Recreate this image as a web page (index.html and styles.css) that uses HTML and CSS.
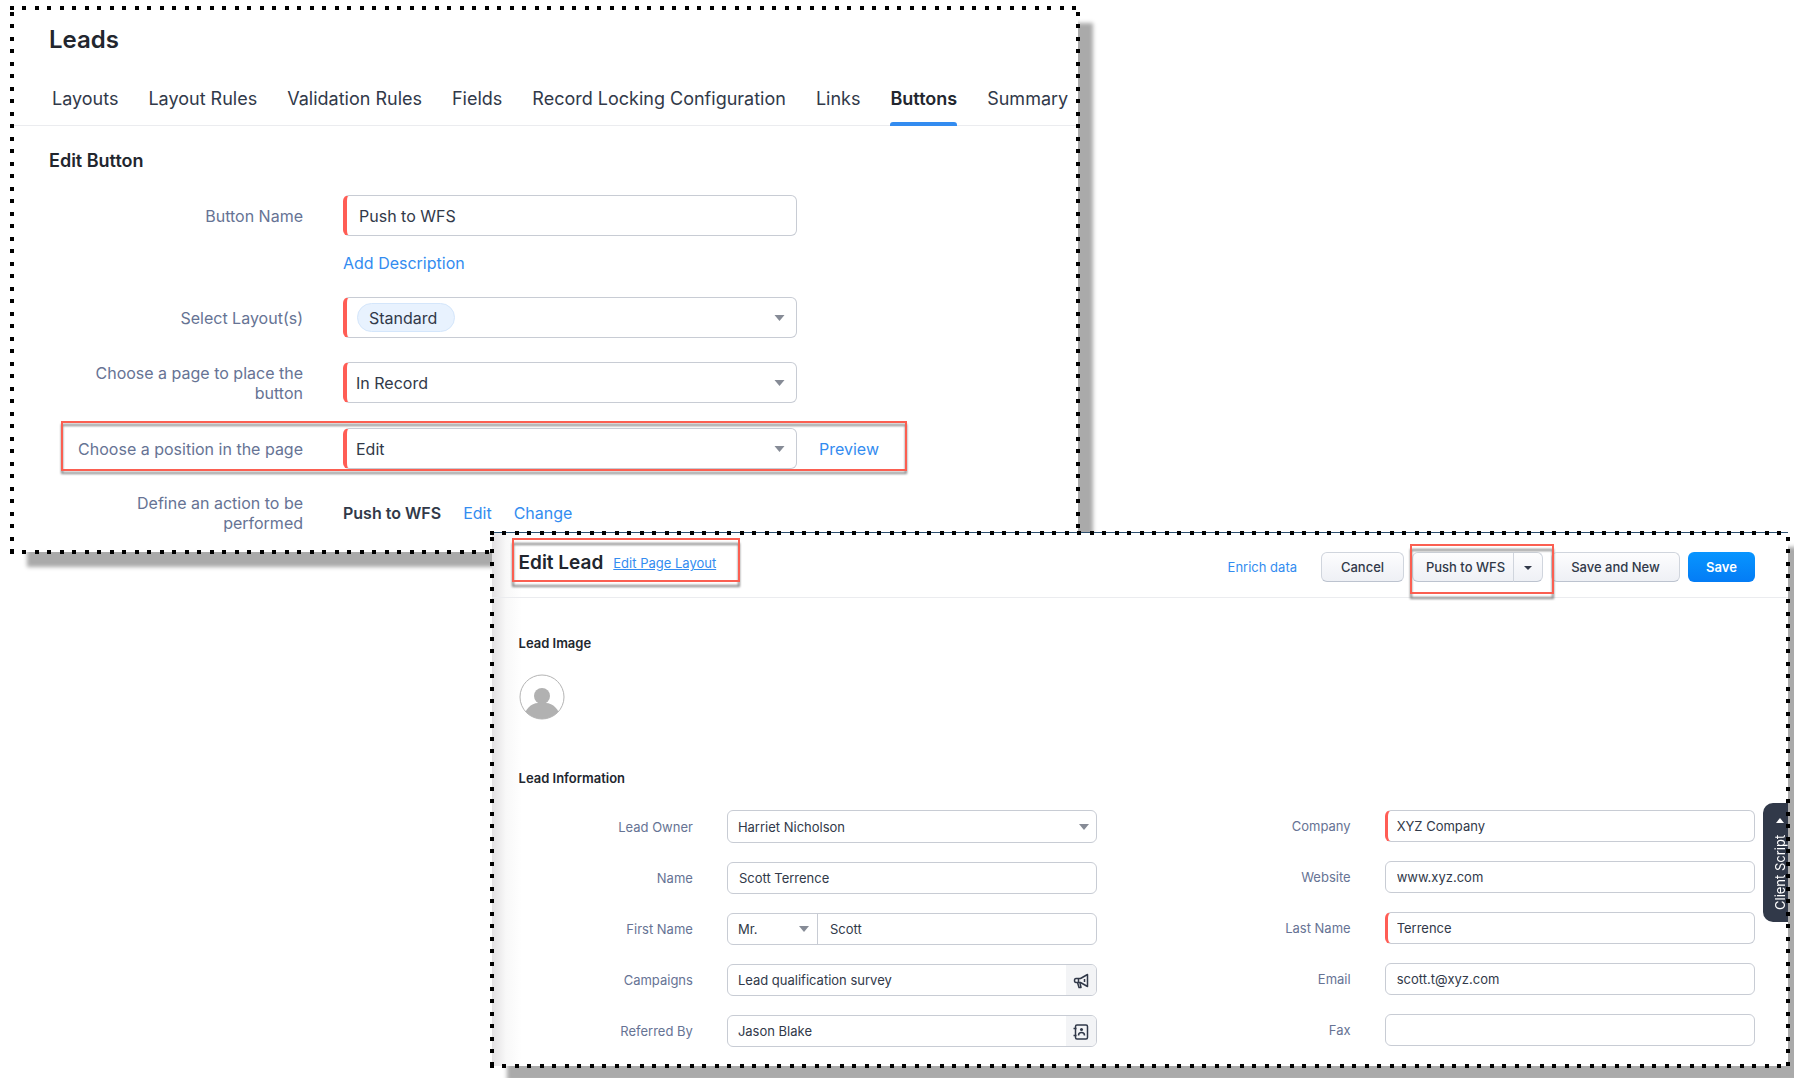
FILE: index.html
```html
<!DOCTYPE html>
<html lang="en">

<head>
    <meta charset="UTF-8">
    <meta name="viewport" content="width=device-width, initial-scale=1.0">
    <title>Leads - Edit Button</title>
    <link rel="stylesheet" href="styles.css">
</head>

<body>

    <!-- ----------- button settings ---------------- -->

    <section class="window settings">
        <h1 class="page-title">Leads</h1>

        <nav class="tabs">
            <a href="#">Layouts</a>
            <a href="#">Layout Rules</a>
            <a href="#">Validation Rules</a>
            <a href="#">Fields</a>
            <a href="#">Record Locking Configuration</a>
            <a href="#">Links</a>
            <a href="#" class="active">Buttons</a>
            <a href="#">Summary</a>
        </nav>

        <h2 class="form-title">Edit Button</h2>

        <form class="settings-form">
            <div class="row">
                <label for="button_name">Button Name</label>
                <input class="control required" type="text" id="button_name" value="Push to WFS">
            </div>

            <a href="#" class="link description">Add Description</a>

            <div class="row">
                <label for="layouts">Select Layout(s)</label>
                <div class="select-box">
                    <span class="chip"></span>
                    <select class="control required in-chip" id="layouts">
                        <option>Standard</option>
                    </select>
                    <svg class="arrow" viewBox="0 0 10 6"><path d="M0 0h10L5 6z" /></svg>
                </div>
            </div>

            <div class="row">
                <label for="page">Choose a page to place the button</label>
                <div class="select-box">
                    <select class="control required" id="page">
                        <option>In Record</option>
                    </select>
                    <svg class="arrow" viewBox="0 0 10 6"><path d="M0 0h10L5 6z" /></svg>
                </div>
            </div>

            <div class="row position-row marked">
                <label for="position">Choose a position in the page</label>
                <div class="select-box">
                    <select class="control required" id="position">
                        <option>Edit</option>
                    </select>
                    <svg class="arrow" viewBox="0 0 10 6"><path d="M0 0h10L5 6z" /></svg>
                </div>
                <a href="#" class="link">Preview</a>
            </div>

            <div class="row">
                <span class="label">Define an action to be performed</span>
                <div class="action">
                    <strong>Push to WFS</strong>
                    <a href="#" class="link">Edit</a>
                    <a href="#" class="link">Change</a>
                </div>
            </div>
        </form>
    </section>

    <!-- ----------- lead form ---------------- -->

    <section class="window lead">
        <header class="lead-header">
            <div class="lead-title marked">
                <h2>Edit Lead</h2>
                <a href="#" class="link">Edit Page Layout</a>
            </div>

            <div class="buttons">
                <a href="#" class="link">Enrich data</a>
                <button type="button" class="btn cancel">Cancel</button>
                <div class="split marked">
                    <button type="button" class="btn push">Push to WFS</button>
                    <button type="button" class="btn more" aria-label="More">
                        <svg viewBox="0 0 8 4"><path d="M0 0h8L4 4z" /></svg>
                    </button>
                </div>
                <button type="button" class="btn save-new">Save and New</button>
                <button type="button" class="btn primary">Save</button>
            </div>
        </header>

        <div class="lead-body">
            <h3>Lead Image</h3>
            <svg class="avatar" viewBox="0 0 46 46">
                <clipPath id="round"><circle cx="23" cy="23" r="22" /></clipPath>
                <circle cx="23" cy="23" r="22" fill="#fff" stroke="#b4b4b4" />
                <g clip-path="url(#round)" fill="#b1b1b1">
                    <ellipse cx="23" cy="22" rx="8" ry="8" />
                    <path d="M4 46c1-10 8-17 15-17h8c7 0 14 7 15 17z" />
                </g>
            </svg>

            <h3>Lead Information</h3>

            <form class="columns">
                <div class="column">
                    <div class="field">
                        <label for="owner">Lead Owner</label>
                        <div class="select-box tall">
                            <select class="control" id="owner">
                                <option>Harriet Nicholson</option>
                            </select>
                            <svg class="arrow" viewBox="0 0 10 6"><path d="M0 0h10L5 6z" /></svg>
                        </div>
                    </div>
                    <div class="field">
                        <label for="name">Name</label>
                        <input class="control" type="text" id="name" value="Scott Terrence">
                    </div>
                    <div class="field">
                        <label for="first_name">First Name</label>
                        <div class="group">
                            <div class="select-box salutation">
                                <select aria-label="Salutation">
                                    <option>Mr.</option>
                                </select>
                                <svg class="arrow" viewBox="0 0 10 6"><path d="M0 0h10L5 6z" /></svg>
                            </div>
                            <input type="text" id="first_name" value="Scott">
                        </div>
                    </div>
                    <div class="field">
                        <label for="campaigns">Campaigns</label>
                        <div class="group">
                            <input type="text" id="campaigns" value="Lead qualification survey">
                            <button type="button" class="lookup" aria-label="Find campaign">
                                <svg viewBox="0 0 16 16">
                                    <path d="M3 5.500h4.500L14.500 1.500v12L7.500 9.500H3c-2 0-2-4 0-4z" />
                                    <path d="M5.500 5.500v4M4.500 9.500l1.500 5h2l-1-4.500M11.500 6v3" />
                                </svg>
                            </button>
                        </div>
                    </div>
                    <div class="field">
                        <label for="referred">Referred By</label>
                        <div class="group">
                            <input type="text" id="referred" value="Jason Blake">
                            <button type="button" class="lookup" aria-label="Find contact">
                                <svg viewBox="0 0 16 16">
                                    <rect x="2.500" y="1" width="12" height="14" rx="1.500" />
                                    <path d="M.5 4.500h3M.5 11.500h3M5.500 11.500c0-4 6-4 6 0" />
                                    <circle class="dot" cx="8.500" cy="5.500" r="1.500" />
                                </svg>
                            </button>
                        </div>
                    </div>
                </div>

                <div class="column">
                    <div class="field">
                        <label for="company">Company</label>
                        <input class="control required" type="text" id="company" value="XYZ Company">
                    </div>
                    <div class="field">
                        <label for="website">Website</label>
                        <input class="control" type="text" id="website" value="www.xyz.com">
                    </div>
                    <div class="field">
                        <label for="last_name">Last Name</label>
                        <input class="control required" type="text" id="last_name" value="Terrence">
                    </div>
                    <div class="field">
                        <label for="email">Email</label>
                        <input class="control" type="text" id="email" value="scott.t@xyz.com">
                    </div>
                    <div class="field">
                        <label for="fax">Fax</label>
                        <input class="control" type="text" id="fax">
                    </div>
                </div>
            </form>
        </div>

        <button type="button" class="client-script">
            <span>Client Script</span>
            <svg viewBox="0 0 8 5"><path d="M0 0h8L4 5z" /></svg>
        </button>
    </section>

</body>

</html>
```
FILE: styles.css
```css
* {
    box-sizing: border-box;
    margin: 0;
    padding: 0;
}

body {
    padding: 8px 6px 12px 12px;
    background: #fff;
    color: #313949;
    font-family: Inter, "Liberation Sans", sans-serif;
    overflow-x: hidden;
}

a {
    color: inherit;
    text-decoration: none;
}

input,
select,
button {
    font: inherit;
    color: inherit;
}

select {
    appearance: none;
}

.link {
    color: #338cf0;
}

/* windows with a dotted frame */

.window {
    position: relative;
    isolation: isolate;
    background: #fff;
    box-shadow: 15px 15px 4px #aaa;
}

.window::after {
    content: "";
    position: absolute;
    inset: -2px;
    z-index: 2;
    pointer-events: none;
    --dots: #000 0 4px, transparent 4px 12px, #000 12px 16px, transparent 16px 25px;
    background:
        linear-gradient(90deg, var(--dots)) 0 0 / 25px 4px repeat-x,
        linear-gradient(90deg, var(--dots)) 0 100% / 25px 4px repeat-x,
        linear-gradient(var(--dots)) 0 6px / 4px 25px repeat-y,
        linear-gradient(var(--dots)) 100% 6px / 4px 25px repeat-y;
}

/* red callout ring, its shadow falls inside as well as below */

.marked {
    position: relative;
}

.marked::after {
    content: "";
    position: absolute;
    inset: 0;
    border: 2px solid #fb5f51;
    filter: drop-shadow(0 5px 1px #888);
    pointer-events: none;
}

/* shared form parts */

.control,
.group {
    width: 100%;
    background: #fff;
    border: 1px solid #c8ccd4;
    border-radius: 6px;
}

.required {
    border-left: 4px solid #ff5d55;
}

.select-box {
    position: relative;
}

.arrow {
    position: absolute;
    right: 11px;
    top: 50%;
    width: 10px;
    height: 6px;
    margin-top: -3px;
    fill: #868b96;
    pointer-events: none;
}

label,
.label {
    color: #667394;
    text-align: right;
}

/* button settings */

.settings {
    width: 60%;
    padding: 16px 0 17px;
    font-size: 16px;
    line-height: 20px;
}

.page-title {
    padding-left: 37px;
    font-size: 24px;
    line-height: 32px;
    font-weight: 600;
    color: #22262e;
}

.tabs {
    display: flex;
    gap: 30px;
    margin-top: 31px;
    padding-left: 40px;
    border-bottom: 1px solid #ebecef;
    font-size: 18px;
    line-height: 24px;
    white-space: nowrap;
}

.tabs a {
    padding-bottom: 11px;
    border-bottom: 4px solid transparent;
    margin-bottom: -1px;
}

.tabs .active {
    position: relative;
    font-weight: 600;
    color: #22262e;
}

.tabs .active::after {
    content: "";
    position: absolute;
    left: 0;
    right: 0;
    bottom: -4px;
    height: 4px;
    border-radius: 3px 3px 0 0;
    background: #338cf0;
}

.form-title {
    margin: 23px 0 20px 37px;
    font-size: 18px;
    line-height: 24px;
    font-weight: 600;
    color: #22262e;
}

.settings-form {
    padding-left: 49px;
}

.row {
    display: flex;
    align-items: center;
    width: 846px;
    margin-bottom: 20px;
    border: 2px solid transparent;
}

.row label,
.row .label {
    width: 240px;
    margin-right: 40px;
}

.row > .control,
.row .select-box {
    width: 454px;
}

.row .control {
    height: 41px;
    padding: 0 12px;
}

.row .select-box .control {
    display: block;
    padding: 0 9px;
}

.row .arrow {
    right: 12px;
    width: 11px;
}

.description {
    display: block;
    margin: -5px 0 22px 282px;
}

.chip {
    position: absolute;
    left: 14px;
    top: 6px;
    width: 98px;
    height: 29px;
    background: #e8f2fe;
    border: 1px solid #d4e6fb;
    border-radius: 15px;
}

.row .control.in-chip {
    position: relative;
    padding-left: 22px;
    background: transparent;
}

.position-row {
    margin-top: -4px;
    padding-top: 5px;
}

.position-row::after {
    inset: -2px;
    filter: drop-shadow(0 3px 1px #888);
}

.position-row .link {
    margin-left: 22px;
}

.settings-form .row:last-child {
    margin: 0;
}

.action {
    display: flex;
    gap: 22px;
}

.action strong {
    font-weight: 600;
}

/* lead form */

.lead {
    width: 73%;
    margin: -20px 0 0 auto;
    padding-bottom: 19px;
    border-top: 1px solid #2f5272;
    background: linear-gradient(90deg, #e2e0e2, #f8f8f8 14px, #fff 30px);
    font-size: 13px;
    line-height: 20px;
}

.lead-header {
    display: flex;
    justify-content: space-between;
    align-items: flex-end;
    height: 65px;
    padding: 0 33px 15px 20px;
    border-bottom: 1px solid #ebecef;
}

.lead-title {
    display: flex;
    align-items: center;
    gap: 10px;
    width: 228px;
    height: 44px;
    padding: 6px 0 0 7px;
}

.lead-title h2 {
    font-size: 19px;
    font-weight: 600;
    color: #22262e;
}

.lead-title .link {
    text-decoration: underline;
}

.buttons {
    display: flex;
    align-items: center;
    gap: 8px;
}

.buttons .link {
    margin-right: 16px;
}

.btn {
    height: 30px;
    border: 1px solid #d0d5dd;
    border-bottom-color: #bcc3cf;
    border-radius: 6px;
    background: linear-gradient(#fdfdfe, #eef0f5);
    font-weight: 500;
}

.cancel {
    width: 83px;
}

.split {
    display: flex;
    z-index: 1;
}

.split::after {
    inset: -8px -11px -12px -2px;
}

.push {
    width: 102px;
    padding-left: 5px;
    border-radius: 6px 0 0 6px;
    white-space: nowrap;
}

.more {
    width: 30px;
    margin-left: -1px;
    border-radius: 0 6px 6px 0;
}

.more svg {
    width: 8px;
    height: 4px;
    vertical-align: middle;
    fill: #313949;
}

.save-new {
    width: 129px;
}

.primary {
    width: 67px;
    border: 0;
    background: linear-gradient(#0795ff, #047cf5);
    color: #fff;
    font-weight: 600;
}

.lead-body {
    padding: 35px 33px 0 27px;
}

.lead-body h3 {
    font-size: 13px;
    font-weight: 600;
    color: #22262e;
}

.avatar {
    display: block;
    width: 46px;
    height: 46px;
    margin: 21px 0 48px;
}

.columns {
    display: grid;
    grid-template-columns: 1fr 1fr;
    gap: 79px;
    margin-top: 22px;
}

.column {
    display: flex;
    flex-direction: column;
    gap: 19px;
}

.field {
    display: flex;
    align-items: center;
    justify-content: flex-end;
    gap: 34px;
}

.field > .control,
.field > .select-box,
.field > .group {
    width: 64%;
}

.field .control {
    display: block;
    height: 32px;
    padding: 0 11px;
}

.field .required {
    border-left-width: 3px;
    padding-left: 9px;
}

.field .tall .control {
    height: 33px;
    padding: 0 10px;
}

.field .arrow {
    right: 8px;
}

.group {
    display: flex;
    height: 32px;
    overflow: hidden;
}

.group input,
.group select {
    width: 100%;
    height: 30px;
    padding: 0 10px;
    border: 0;
    background: transparent;
}

.salutation {
    flex: none;
    width: 90px;
    border-right: 1px solid #c8ccd4;
}

.salutation + input {
    padding-left: 12px;
}

.lookup {
    flex: none;
    width: 30px;
    border: 0;
    background: #f3f4f6;
}

.lookup svg {
    width: 16px;
    height: 16px;
    vertical-align: middle;
    fill: none;
    stroke: #313949;
    stroke-width: 1.5;
    stroke-linejoin: round;
}

.lookup .dot {
    fill: #313949;
    stroke: none;
}

/* side tab, read from bottom to top */
.client-script {
    position: absolute;
    right: 0;
    top: 270px;
    display: flex;
    align-items: center;
    gap: 12px;
    width: 25px;
    height: 119px;
    padding: 12px 9px 12px 0;
    border: 0;
    border-radius: 0 10px 10px 0;
    background: #313949;
    color: #fff;
    writing-mode: vertical-rl;
    transform: rotate(180deg);
}

.client-script svg {
    width: 8px;
    height: 5px;
    fill: #fff;
}
```
